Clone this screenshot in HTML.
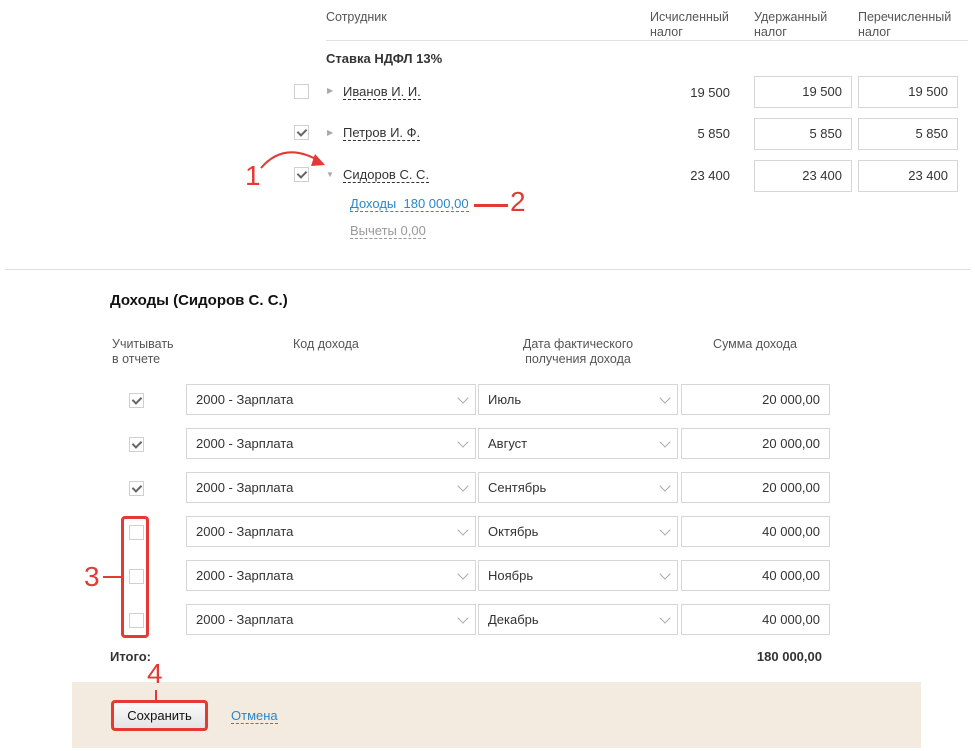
<!DOCTYPE html>
<html><head><meta charset="utf-8"><style>
body{margin:0;width:975px;height:751px;background:#fff;font-family:"Liberation Sans",Arial,sans-serif;font-size:13px;color:#333;position:relative;overflow:hidden}
.a{position:absolute;white-space:nowrap}
.h{color:#555;font-size:12.5px;line-height:15px}
.box{position:absolute;border:1px solid #d6d6d6;background:#fff;box-sizing:border-box}
.inp{text-align:right;padding-right:9px;line-height:30px}
.cb{position:absolute;width:15px;height:15px;border:1px solid #d0d0d0;box-sizing:border-box;background:#fff}
.ck::after{content:"";position:absolute;left:4px;top:1px;width:4px;height:7px;border:solid #666;border-width:0 2px 2px 0;transform:rotate(45deg)}
.dash{border-bottom:1px dashed #333}
.sel{padding-left:9px;line-height:29px}
.sel::after{content:"";position:absolute;right:8px;top:9px;width:7px;height:7px;border:solid #aaa;border-width:0 1px 1px 0;transform:rotate(45deg)}
.red{color:#e53935;font-size:28px}
</style></head><body>
<div class="a h" style="left:326px;top:10px">Сотрудник</div>
<div class="a h" style="left:650px;top:10px">Исчисленный<br>налог</div>
<div class="a h" style="left:754px;top:10px">Удержанный<br>налог</div>
<div class="a h" style="left:858px;top:10px">Перечисленный<br>налог</div>
<div class="a" style="left:326px;top:40px;width:642px;height:1px;background:#e0e0e0"></div>
<div class="a" style="left:326px;top:51px;font-weight:bold">Ставка НДФЛ 13%</div>

<div class="cb" style="left:294px;top:84px"></div>
<div class="a" style="left:327px;top:86px;color:#aaa;font-size:8px">▶</div>
<div class="a" style="left:343px;top:84px"><span class="dash">Иванов И. И.</span></div>
<div class="a" style="left:650px;top:85px;width:80px;text-align:right">19 500</div>
<div class="box inp" style="left:754px;top:76px;width:98px;height:32px">19 500</div>
<div class="box inp" style="left:858px;top:76px;width:100px;height:32px">19 500</div>

<div class="cb ck" style="left:294px;top:125px"></div>
<div class="a" style="left:327px;top:128px;color:#aaa;font-size:8px">▶</div>
<div class="a" style="left:343px;top:125px"><span class="dash">Петров И. Ф.</span></div>
<div class="a" style="left:650px;top:126px;width:80px;text-align:right">5 850</div>
<div class="box inp" style="left:754px;top:118px;width:98px;height:32px">5 850</div>
<div class="box inp" style="left:858px;top:118px;width:100px;height:32px">5 850</div>

<div class="cb ck" style="left:294px;top:167px"></div>
<div class="a" style="left:326px;top:170px;color:#aaa;font-size:8px">▼</div>
<div class="a" style="left:343px;top:167px"><span class="dash">Сидоров С. С.</span></div>
<div class="a" style="left:650px;top:168px;width:80px;text-align:right">23 400</div>
<div class="box inp" style="left:754px;top:160px;width:98px;height:32px">23 400</div>
<div class="box inp" style="left:858px;top:160px;width:100px;height:32px">23 400</div>

<div class="a" style="left:350px;top:196px;color:#2a88c8"><span style="border-bottom:1px dashed #2a88c8">Доходы&nbsp; 180 000,00</span></div>
<div class="a" style="left:350px;top:223px;color:#999"><span style="border-bottom:1px dashed #999">Вычеты 0,00</span></div>

<div class="a red" style="left:245px;top:160px">1</div>
<svg class="a" style="left:255px;top:140px" width="80" height="35"><path d="M6 28 Q30 0 66 22" fill="none" stroke="#e53935" stroke-width="2"/><path d="M60 14 L70 25 L56 26 Z" fill="#e53935"/></svg>
<div class="a" style="left:474px;top:204px;width:34px;height:3px;background:#e53935"></div>
<div class="a red" style="left:510px;top:186px">2</div>

<div class="a" style="left:5px;top:269px;width:965px;height:1px;background:#ddd"></div>
<div class="a" style="left:110px;top:292px;font-weight:bold;font-size:15px;color:#111">Доходы (Сидоров С. С.)</div>
<div class="a h" style="left:112px;top:337px">Учитывать<br>в отчете</div>
<div class="a h" style="left:293px;top:337px">Код дохода</div>
<div class="a h" style="left:478px;top:337px;width:200px;text-align:center">Дата фактического<br>получения дохода</div>
<div class="a h" style="left:681px;top:337px;width:148px;text-align:center">Сумма дохода</div>

<div id="rows"></div>
<script>
var m=[["Июль","20 000,00",1],["Август","20 000,00",1],["Сентябрь","20 000,00",1],["Октябрь","40 000,00",0],["Ноябрь","40 000,00",0],["Декабрь","40 000,00",0]],h="";
m.forEach(function(r,i){var t=384+i*44;
h+='<div class="cb'+(r[2]?' ck':'')+'" style="left:129px;top:'+(t+9)+'px"></div>';
h+='<div class="box sel" style="left:186px;top:'+t+'px;width:290px;height:31px">2000 - Зарплата</div>';
h+='<div class="box sel" style="left:478px;top:'+t+'px;width:200px;height:31px">'+r[0]+'</div>';
h+='<div class="box inp" style="left:681px;top:'+t+'px;width:149px;height:31px;line-height:29px">'+r[1]+'</div>';});
document.getElementById("rows").innerHTML=h;
</script>
<div class="a" style="left:121px;top:516px;width:28px;height:122px;border:3px solid #e53935;border-radius:4px;box-sizing:border-box"></div>
<div class="a" style="left:103px;top:576px;width:18px;height:2px;background:#e53935"></div>
<div class="a red" style="left:84px;top:561px">3</div>

<div class="a" style="left:110px;top:649px;font-weight:bold">Итого:</div>
<div class="a" style="left:681px;top:649px;width:141px;text-align:right;font-weight:bold">180 000,00</div>

<div class="a" style="left:72px;top:682px;width:849px;height:66px;background:#f3ebe0"></div>
<div class="a red" style="left:147px;top:658px">4</div>
<div class="a" style="left:155px;top:690px;width:2px;height:10px;background:#e53935"></div>
<div class="a" style="left:111px;top:700px;width:97px;height:31px;border:3px solid #e53935;border-radius:4px;box-sizing:border-box;background:linear-gradient(#fafafa,#e4e4e4);text-align:center;line-height:25px;color:#111">Сохранить</div>
<div class="a" style="left:231px;top:708px;color:#2a88c8"><span style="border-bottom:1px dashed #2a88c8">Отмена</span></div>
</body></html>
